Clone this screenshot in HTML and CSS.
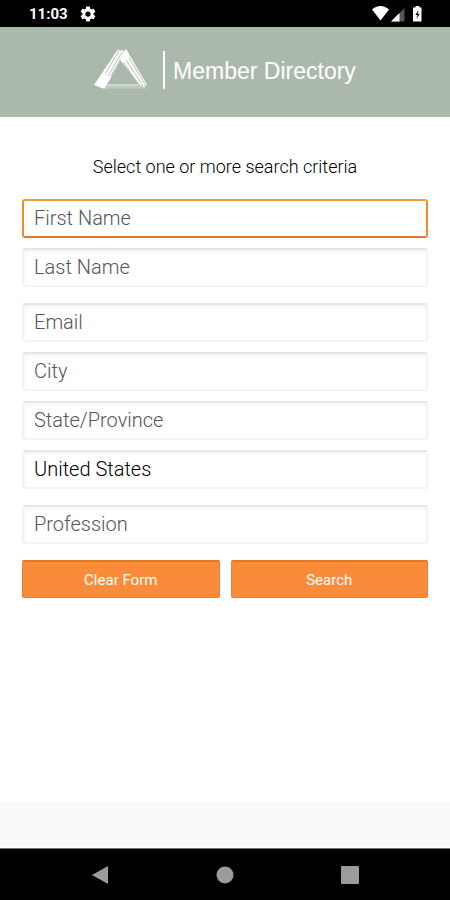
FILE: index.html
```html
<!DOCTYPE html>
<html lang="en">
<head>
<meta charset="utf-8">
<meta name="viewport" content="width=device-width, initial-scale=1">
<title>Member Directory</title>
<link rel="stylesheet" href="styles.css">
</head>
<body>
<div class="status">
  <span class="clock">11:03</span>
  <svg class="gear" width="18" height="18" viewBox="0 0 24 24" fill="#fff" aria-hidden="true"><path d="M19.43 12.98c.04-.32.07-.64.07-.98s-.03-.66-.07-.98l2.11-1.65c.19-.15.24-.42.12-.64l-2-3.46c-.12-.22-.39-.3-.61-.22l-2.49 1c-.52-.4-1.08-.73-1.69-.98l-.38-2.65A.488.488 0 0 0 14 2h-4c-.25 0-.46.18-.49.42l-.38 2.65c-.61.25-1.17.59-1.69.98l-2.49-1c-.23-.09-.49 0-.61.22l-2 3.46c-.13.22-.07.49.12.64l2.11 1.65c-.04.32-.07.65-.07.98s.03.66.07.98l-2.11 1.65c-.19.15-.24.42-.12.64l2 3.46c.12.22.39.3.61.22l2.49-1c.52.4 1.08.73 1.69.98l.38 2.65c.03.24.24.42.49.42h4c.25 0 .46-.18.49-.42l.38-2.65c.61-.25 1.17-.59 1.69-.98l2.49 1c.23.09.49 0 .61-.22l2-3.46c.12-.22.07-.49-.12-.64zM12 15.500a3.500 3.500 0 1 1 0-7 3.500 3.500 0 0 1 0 7z"/></svg>
  <svg class="signals" width="52" height="18" viewBox="0 0 52 18" aria-hidden="true">
    <path d="M0 4.500C5-.3 12-.3 17 4.500L8.500 15.500z" fill="#fff"/>
    <path d="M19 16.500 32.500 3v13.500z" fill="#555"/>
    <path d="M19 16.500 27.500 8v8.500z" fill="#fff"/>
    <path d="M43.500 1h4v1.500h2V16.500h-8.500V2.500h2.500z" fill="#fff"/>
    <path d="M46.500 5 43.300 10h1.900l-.7 4 3.300-5.200h-2z" fill="#222"/>
  </svg>
</div>
<header class="header">
  <svg class="logo" width="54" height="42" viewBox="0 0 54 42" aria-hidden="true">
    <defs><linearGradient id="base" x1="0" x2="0" y1="0" y2="1"><stop offset="0" stop-color="#fff" stop-opacity=".5"/><stop offset="1" stop-color="#fff" stop-opacity=".1"/></linearGradient></defs>
    <path d="M14 35h33l6 5H11z" fill="url(#base)"/>
    <path d="M0 36 23.500 1 31 2 26 12 10.500 40z" fill="#fff"/>
    <path d="M32 0 53 36l-3 2-5-3L25.500 10z" fill="#fff"/>
    <path d="M25 2 11 25M28 3 14 27M31 2 17 27" stroke="#abb9ad" stroke-width=".9"/>
    <path d="M25.500 11 32 0l3 5-6 7z" fill="#fff"/>
    <path d="M35 9 52 37M32 11 49 37M29.500 13 45 37" stroke="#abb9ad" stroke-width=".9"/>
  </svg>
  <h1 class="title">Member Directory</h1>
</header>
<main class="content">
  <form>
    <p class="intro">Select one or more search criteria</p>
    <div class="group">
      <input class="field focused" type="text" placeholder="First Name" aria-label="First Name">
      <input class="field" type="text" placeholder="Last Name" aria-label="Last Name">
    </div>
    <div class="group">
      <input class="field" type="email" placeholder="Email" aria-label="Email">
      <input class="field" type="text" placeholder="City" aria-label="City">
      <input class="field" type="text" placeholder="State/Province" aria-label="State/Province">
      <select class="field" aria-label="Country"><option>United States</option></select>
    </div>
    <div class="group">
      <input class="field" type="text" placeholder="Profession" aria-label="Profession">
    </div>
    <div class="actions">
      <button class="button" type="reset">Clear Form</button>
      <button class="button" type="submit">Search</button>
    </div>
  </form>
</main>
<footer class="toolbar"></footer>
<nav class="nav" aria-label="System">
  <button class="key" type="button" aria-label="Back"><svg width="18" height="20" viewBox="0 0 18 20"><path d="M1 10 17 1v18z" fill="#9b9b9b"/></svg></button>
  <button class="key" type="button" aria-label="Home"><svg width="18" height="18" viewBox="0 0 18 18"><circle cx="9" cy="9" r="8.500" fill="#9b9b9b"/></svg></button>
  <button class="key" type="button" aria-label="Recent apps"><svg width="18" height="18" viewBox="0 0 18 18"><rect width="18" height="18" rx="1" fill="#9b9b9b"/></svg></button>
</nav>
</body>
</html>
```
FILE: styles.css
```css
* {
  box-sizing: border-box;
}

body {
  margin: 0;
  min-height: 100vh;
  display: flex;
  flex-direction: column;
  background: #fff;
  color: #000;
  font-family: Roboto, sans-serif;
}

.status {
  display: flex;
  align-items: center;
  height: 27px;
  padding: 0 26px 0 29px;
  background: #000;
  color: #fff;
}

.clock {
  font-size: 15px;
  font-weight: 700;
  line-height: 20px;
}

.gear {
  margin-left: 11px;
}

.signals {
  margin-left: auto;
}

.header {
  display: flex;
  align-items: center;
  justify-content: center;
  height: 90px;
  padding-bottom: 4px;
  background: #abb9ad;
  color: #fff;
}

.logo {
  margin-right: 15px;
}

.title {
  margin: 0;
  padding: 3px 0 0 8px;
  border-left: 2px solid #fff;
  font-family: "Liberation Sans", sans-serif;
  font-size: 23px;
  font-weight: 400;
  line-height: 35px;
}

.content {
  flex: 1;
  padding: 38px 22px 0;
}

.intro {
  margin: 0 0 20px;
  font-size: 18px;
  font-weight: 300;
  line-height: 24px;
  text-align: center;
}

.group {
  display: grid;
  gap: 10px;
  margin-bottom: 16px;
}

.field {
  width: 100%;
  height: 39px;
  padding: 0 10px 2px;
  border: 2px solid;
  border-color: #e6e6e6 #f3f3f3 #f3f3f3;
  border-radius: 3px;
  outline: 0;
  background: #fff;
  box-shadow: inset 1px 2px 3px #f4f4f4;
  color: #000;
  font-family: inherit;
  font-size: 20px;
  font-weight: 300;
  appearance: none;
}

.field::placeholder {
  color: #555;
  opacity: 1;
}

.focused {
  border-color: #f09d35 #ee8b30 #e67627;
  box-shadow: none;
}

.actions {
  display: grid;
  grid-template-columns: 1fr 1fr;
  gap: 11px;
}

.button {
  height: 38px;
  padding: 0;
  border: 1px solid #e2843a;
  border-top: 2px solid #dc7a22;
  border-radius: 2px;
  background: #fa8b3a;
  color: #fff;
  font-family: inherit;
  font-size: 15px;
}

.toolbar {
  height: 45px;
  background: #f9f9f9;
  border-bottom: 3px solid #fff;
}

.nav {
  display: grid;
  grid-template-columns: repeat(3, 125px);
  justify-content: center;
  height: 52px;
  border-top: 1px solid #777;
  background: #000;
}

.key {
  display: grid;
  place-items: center;
  padding: 0;
  border: 0;
  background: none;
}
```
